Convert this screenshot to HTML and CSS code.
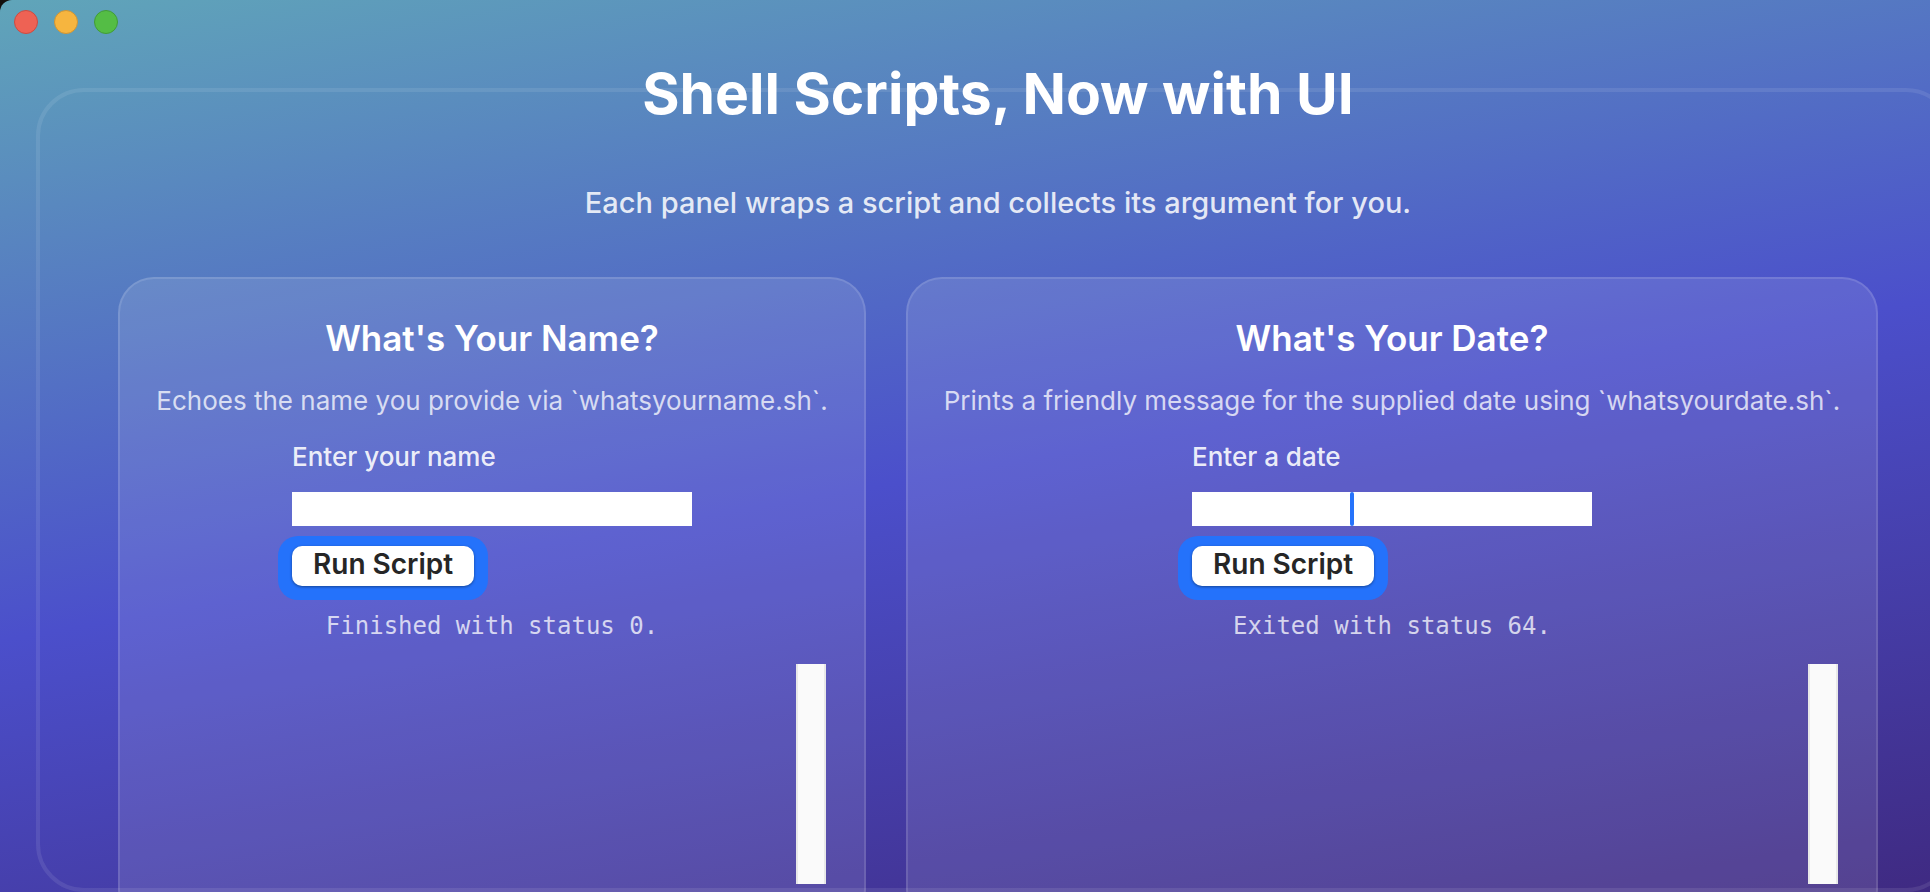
FILE: index.html
```html
<!DOCTYPE html>
<html lang="en">
<head>
<meta charset="utf-8">
<title>Shell Scripts, Now with UI</title>
<link rel="stylesheet" href="styles.css">
</head>
<body>
<div class="window">
  <div class="titlebar">
    <button class="light light-close" aria-label="Close"></button>
    <button class="light light-minimize" aria-label="Minimize"></button>
    <button class="light light-zoom" aria-label="Zoom"></button>
  </div>
  <div class="frame"></div>
  <main class="content">
    <h1 class="title">Shell Scripts, Now with UI</h1>
    <p class="subtitle">Each panel wraps a script and collects its argument for you.</p>
    <div class="panels">
      <section class="panel">
        <h2 class="panel-title">What's Your Name?</h2>
        <p class="panel-text">Echoes the name you provide via `whatsyourname.sh`.</p>
        <form class="form">
          <label class="label" for="name">Enter your name</label>
          <input class="field" id="name" type="text">
          <button class="run" type="button">Run Script</button>
        </form>
        <p class="status">Finished with status 0.</p>
        <div class="output"><div class="scrollbar"></div></div>
      </section>
      <section class="panel">
        <h2 class="panel-title">What's Your Date?</h2>
        <p class="panel-text">Prints a friendly message for the supplied date using `whatsyourdate.sh`.</p>
        <form class="form">
          <label class="label" for="date">Enter a date</label>
          <div class="field-wrap">
            <input class="field" id="date" type="text">
            <span class="caret"></span>
          </div>
          <button class="run" type="button">Run Script</button>
        </form>
        <p class="status">Exited with status 64.</p>
        <div class="output"><div class="scrollbar"></div></div>
      </section>
    </div>
  </main>
</div>
</body>
</html>
```
FILE: styles.css
```css
* {
  box-sizing: border-box;
}

body {
  margin: 0;
  background: #14100e;
  color: #fff;
  font-family: Inter, "Liberation Sans", sans-serif;
}

h1, h2, p {
  margin: 0;
}

.window {
  position: relative;
  display: flex;
  flex-direction: column;
  height: 100vh;
  overflow: hidden;
  border-top-left-radius: 12px;
  background: linear-gradient(170deg, #60a5b9 0%, #4b4fcb 52%, #3f2a82 100%);
}

.titlebar {
  display: flex;
  gap: 16px;
  padding: 10px 14px 0;
}

.light {
  width: 24px;
  height: 24px;
  padding: 0;
  border: 1px solid;
  border-radius: 50%;
}

.light-close {
  background: #ee6254;
  border-color: #cd4b41;
}

.light-minimize {
  background: #f6b53f;
  border-color: #cf9434;
}

.light-zoom {
  background: #54bd45;
  border-color: #429b38;
}

.frame {
  position: absolute;
  inset: 88px -24px 0 36px;
  border: 4px solid rgba(255, 255, 255, 0.09);
  border-radius: 48px;
}

.content {
  display: flex;
  flex: 1;
  flex-direction: column;
  align-items: center;
  min-height: 0;
  padding: 24px 52px 0 118px;
}

.title {
  font-size: 57px;
  font-weight: 700;
  line-height: 72px;
}

.subtitle {
  margin-top: 55px;
  color: rgba(255, 255, 255, 0.85);
  font-size: 29px;
  font-weight: 500;
  line-height: 36px;
}

.panels {
  display: grid;
  flex: none;
  grid-template-columns: minmax(0, 748fr) minmax(0, 972fr);
  gap: 40px;
  width: 100%;
  margin-top: 56px;
}

.panel {
  display: flex;
  flex-direction: column;
  align-items: center;
  padding: 38px;
  border: 2px solid rgba(255, 255, 255, 0.12);
  border-radius: 36px;
  background: rgba(255, 255, 255, 0.11);
  white-space: nowrap;
}

.panel-title {
  font-size: 35px;
  font-weight: 600;
  line-height: 42px;
}

.panel-text {
  margin-top: 26px;
  color: rgba(255, 255, 255, 0.75);
  font-size: 26px;
  line-height: 32px;
}

.form {
  display: flex;
  flex-direction: column;
  align-items: flex-start;
  width: 400px;
  margin-top: 24px;
  isolation: isolate;
}

.label {
  color: rgba(255, 255, 255, 0.9);
  font-size: 26px;
  font-weight: 500;
  line-height: 32px;
}

.field {
  display: block;
  width: 400px;
  height: 34px;
  margin-top: 19px;
  padding: 0 4px;
  border: 0;
  border-radius: 0;
  background: #fff;
  color: #262626;
  font: inherit;
  font-size: 26px;
  outline: 0;
}

.field-wrap {
  position: relative;
}

.caret {
  position: absolute;
  top: 19px;
  left: 158px;
  width: 4px;
  height: 34px;
  border-radius: 2px;
  background: #2673fb;
}

.run {
  position: relative;
  height: 40px;
  margin-top: 20px;
  padding: 0 21px 4px;
  border: 0;
  border-radius: 10px;
  background: #fff;
  box-shadow: 0 1px 3px rgba(0, 0, 0, 0.4);
  color: #262626;
  font: inherit;
  font-size: 28px;
  font-weight: 600;
  line-height: 36px;
}

.run::before {
  position: absolute;
  z-index: -1;
  inset: -10px -14px -14px;
  border-radius: 20px;
  background: #2472fb;
  content: "";
}

.status {
  margin-top: 24px;
  color: rgba(255, 255, 255, 0.75);
  font-family: "DejaVu Sans Mono", monospace;
  font-size: 24px;
  line-height: 32px;
}

.output {
  display: flex;
  justify-content: flex-end;
  width: 100%;
  height: 220px;
  margin-top: 22px;
}

.scrollbar {
  width: 30px;
  border: solid #e8e8e8;
  border-width: 0 2px;
  background: #fafafa;
}
```
